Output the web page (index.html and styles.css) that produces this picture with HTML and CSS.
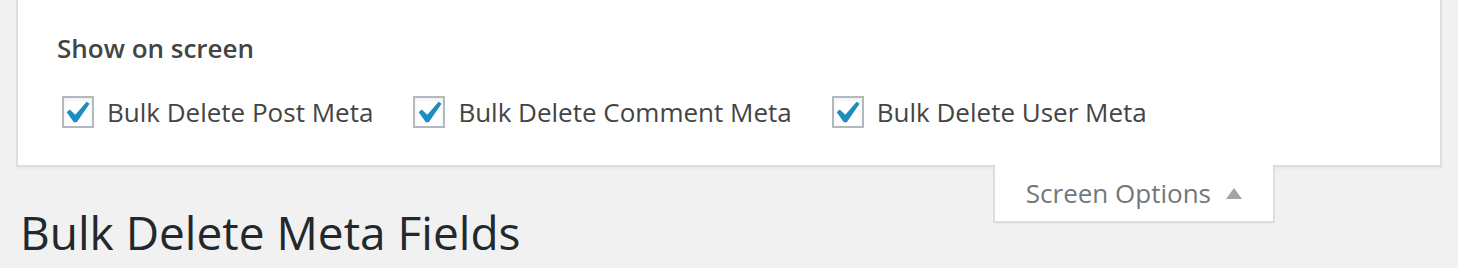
FILE: index.html
```html
<!DOCTYPE html>
<html>
<head>
<meta charset="utf-8">
<link rel="stylesheet" href="styles.css">
</head>
<body>
<div class="screen-meta">
  <div class="legend">Show on screen</div>
  <div class="prefs">
    <label class="pref"><span class="cb"><svg viewBox="0 0 20 20" width="44" height="44"><path d="M14.83 4.89l1.34.94-5.81 8.38H9.02L5.78 9.670l1.34-1.25 2.57 2.4z"/></svg></span>Bulk Delete Post Meta</label>
    <label class="pref"><span class="cb"><svg viewBox="0 0 20 20" width="44" height="44"><path d="M14.83 4.89l1.34.94-5.81 8.38H9.02L5.78 9.670l1.34-1.25 2.57 2.4z"/></svg></span>Bulk Delete Comment Meta</label>
    <label class="pref"><span class="cb"><svg viewBox="0 0 20 20" width="44" height="44"><path d="M14.83 4.89l1.34.94-5.81 8.38H9.02L5.78 9.670l1.34-1.25 2.57 2.4z"/></svg></span>Bulk Delete User Meta</label>
  </div>
</div>
<div class="meta-links">
  <div class="toggle">Screen Options<svg class="arrow" viewBox="0 0 16 11" width="16" height="11"><polygon points="8,0 16,11 0,11"/></svg></div>
</div>
<h1 class="title">Bulk Delete Meta Fields</h1>
</body>
</html>
```
FILE: styles.css
```css
html, body {
  margin: 0;
  padding: 0;
  background: #f1f1f1;
  font-family: "Open Sans", "DejaVu Sans", sans-serif;
}
.screen-meta {
  margin: 0 16px 0 16px;
  background: #fff;
  border: 2px solid #dedede;
  border-top: 0;
  box-shadow: 0 2px 2px rgba(0, 0, 0, 0.04);
  padding: 29px 0 37px 39px;
}
.legend {
  font-size: 26px;
  line-height: 38px;
  font-weight: 600;
  color: #444;
}
.prefs {
  display: flex;
  align-items: center;
  margin-top: 29px;
  gap: 40px;
}
.pref {
  display: flex;
  align-items: center;
  font-size: 26px;
  line-height: 32px;
  color: #444;
}
.pref:first-child {
  margin-left: 5px;
}
.cb {
  position: relative;
  width: 32px;
  height: 32px;
  box-sizing: border-box;
  border: 2px solid #b4b9be;
  background: #fff;
  box-shadow: inset 0 2px 4px rgba(0, 0, 0, 0.07);
  margin-right: 13px;
  flex: none;
}
.cb svg {
  position: absolute;
  left: -9.7px;
  top: -6.8px;
  fill: #1e8cbe;
}
.meta-links {
  display: flex;
  justify-content: flex-end;
  margin-top: -2px;
  margin-right: 183px;
}
.toggle {
  display: flex;
  align-items: center;
  height: 56px;
  line-height: 56px;
  padding: 0 31px 0 31px;
  background: #fff;
  border: 2px solid #dedede;
  border-top: 0;
  box-shadow: 0 2px 2px -2px rgba(0, 0, 0, 0.1);
  font-size: 26px;
  color: #72777c;
  position: relative;
}
.arrow {
  fill: #a0a5aa;
  margin-left: 15px;
}
.title {
  margin: -21px 0 0 20px;
  font-size: 46px;
  line-height: 60px;
  font-weight: 400;
  color: #23282d;
}
```
